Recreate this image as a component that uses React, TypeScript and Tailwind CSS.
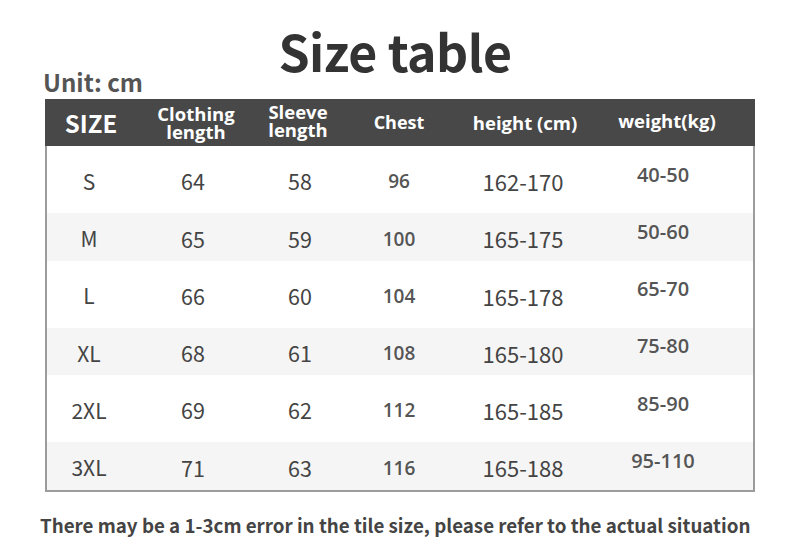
import React from "react";

type Row = {
  size: string;
  clothing: number;
  sleeve: number;
  chest: number;
  height: string;
  weight: string;
};

const rows: Row[] = [
  { size: "S", clothing: 64, sleeve: 58, chest: 96, height: "162-170", weight: "40-50" },
  { size: "M", clothing: 65, sleeve: 59, chest: 100, height: "165-175", weight: "50-60" },
  { size: "L", clothing: 66, sleeve: 60, chest: 104, height: "165-178", weight: "65-70" },
  { size: "XL", clothing: 68, sleeve: 61, chest: 108, height: "165-180", weight: "75-80" },
  { size: "2XL", clothing: 69, sleeve: 62, chest: 112, height: "165-185", weight: "85-90" },
  { size: "3XL", clothing: 71, sleeve: 63, chest: 116, height: "165-188", weight: "95-110" },
];

const cols = "grid grid-cols-[90px_122px_82px_120px_130px_1fr]";
const cjk = "font-['Noto_Sans_CJK_SC',sans-serif]";
const open = "font-['Open_Sans',sans-serif]";

export default function App() {
  return (
    <div className="w-[800px] h-[555px] bg-white flex flex-col overflow-hidden">
      <h1 className={`${cjk} text-center font-bold text-[50px] leading-none text-[#333] mt-[25px] pr-[10px] tracking-[-0.5px]`}>
        Size table
      </h1>
      <div className={`${cjk} font-bold text-[24px] leading-none text-[#555] ml-[43px] mt-[-5px]`}>
        Unit: cm
      </div>

      <div className="mx-[45px] mt-[5px] border-x-2 border-b-2 border-[#9c9c9c]">
        <div className={`${cols} h-[47px] bg-[#484848] text-white items-center text-center -mx-[2px]`}>
          <div className={`${cjk} font-bold text-[24px] pl-[2px]`}>SIZE</div>
          <div className={`${open} font-bold text-[18.5px] leading-[18px]`}>
            Clothing
            <br />
            length
          </div>
          <div className={`${open} font-bold text-[18.5px] leading-[18px] -mt-[4px]`}>
            Sleeve
            <br />
            length
          </div>
          <div className={`${open} font-bold text-[18px]`}>Chest</div>
          <div className={`${open} font-bold text-[18.5px] pl-[2px]`}>height (cm)</div>
          <div className={`${open} font-bold text-[18.5px] pr-[10px] -mt-[4px]`}>weight(kg)</div>
        </div>

        {rows.map((r, i) => (
          <div
            key={r.size}
            className={`${cols} items-center text-center ${
              i % 2 === 0 ? "h-[67px] bg-white" : "h-[47.5px] bg-[#f5f5f5]"
            }`}
          >
            <div className={`${cjk} text-[21px] text-[#444] pt-[4px] pr-[6px]`}>{r.size}</div>
            <div className={`${cjk} text-[21.5px] text-[#444] pt-[4px] pr-[10px]`}>{r.clothing}</div>
            <div className={`${cjk} text-[21.5px] text-[#444] pt-[4px]`}>{r.sleeve}</div>
            <div className={`${open} font-semibold text-[19px] text-[#555] pt-[4px] pr-[4px]`}>{r.chest}</div>
            <div className={`${cjk} text-[22px] text-[#444] pt-[4px] pr-[6px]`}>{r.height}</div>
            <div className={`${open} font-semibold text-[20px] text-[#555] pr-[18px] -mt-[10px]`}>{r.weight}</div>
          </div>
        ))}
      </div>

      <div className={`${cjk} font-bold text-[18.75px] leading-none text-[#444] ml-[40px] mt-[24px] whitespace-nowrap`}>
        There may be a 1-3cm error in the tile size, please refer to the actual situation
      </div>
    </div>
  );
}
